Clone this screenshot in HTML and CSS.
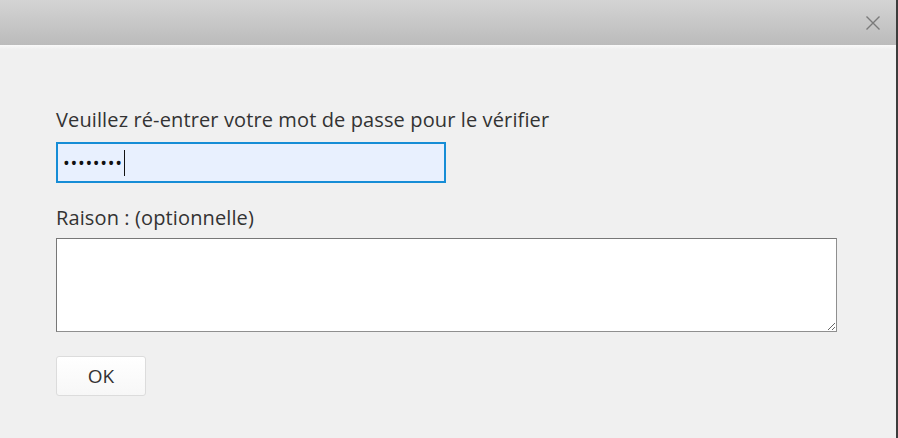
FILE: index.html
```html
<!DOCTYPE html>
<html lang="fr">
<head>
<meta charset="utf-8">
<title>Vérification</title>
<link rel="stylesheet" href="styles.css">
</head>
<body>
<div class="dialog">
  <div class="titlebar">
    <button class="close" aria-label="Fermer">
      <svg width="14" height="14" viewBox="0 0 14 14"><path d="M0.5 0.5 L13.5 13.5 M13.5 0.5 L0.5 13.5" stroke="#7a7a7a" stroke-width="1.4" fill="none"/></svg>
    </button>
  </div>
  <div class="titleshadow"></div>
  <form class="content">
    <label class="label first">Veuillez ré-entrer votre mot de passe pour le vérifier</label>
    <div class="password"><span class="dots">••••••••</span><span class="caret"></span></div>
    <label class="label second">Raison : (optionnelle)</label>
    <textarea class="reason"></textarea>
    <button type="button" class="ok">OK</button>
  </form>
</div>
</body>
</html>
```
FILE: styles.css
```css
html, body {
  margin: 0;
  padding: 0;
  background: #f0f0f0;
}
.dialog {
  width: 896px;
  height: 438px;
  border-right: 2px solid #3c3c3c;
  background: #f0f0f0;
  display: flex;
  flex-direction: column;
  font-family: "Open Sans", "Noto Sans", sans-serif;
  color: #333;
}
.titlebar {
  height: 45px;
  background: linear-gradient(#d4d4d4, #bbbbbb);
  display: flex;
  justify-content: flex-end;
  align-items: flex-start;
}
.close {
  margin: 16px 16px 0 0;
  padding: 0;
  border: 0;
  background: none;
  width: 14px;
  height: 14px;
  display: block;
}
.close svg { display: block; }
.titleshadow {
  height: 4px;
  background: linear-gradient(#f9f9f9, #f0f0f0);
}
.content {
  display: flex;
  flex-direction: column;
  align-items: flex-start;
  padding: 57px 0 0 56px;
}
.label {
  font-size: 20px;
  line-height: 27px;
  letter-spacing: 0.12px;
  color: #333;
}
.password {
  margin-top: 9px;
  box-sizing: border-box;
  width: 390px;
  height: 41px;
  border: 2px solid #168dd6;
  background: #e8f0fe;
  display: flex;
  align-items: center;
  padding-left: 5px;
}
.dots {
  font-size: 18px;
  letter-spacing: 0.7px;
  color: #111;
}
.caret {
  width: 1px;
  height: 26px;
  background: #111;
  margin-left: 1px;
}
.second {
  margin-top: 21px;
}
.reason {
  margin: 7px 0 0 0;
  box-sizing: border-box;
  width: 781px;
  height: 94px;
  border: 1px solid #8f8f8f;
  border-top-color: #777;
  border-left-color: #777;
  background: #fff;
  padding: 4px;
  font-family: inherit;
}
.ok {
  margin-top: 24px;
  box-sizing: border-box;
  width: 90px;
  height: 40px;
  border: 1px solid #dcdcdc;
  border-radius: 3px;
  background: linear-gradient(#ffffff, #f7f7f7);
  font-family: inherit;
  font-size: 19px;
  color: #333;
}
```
